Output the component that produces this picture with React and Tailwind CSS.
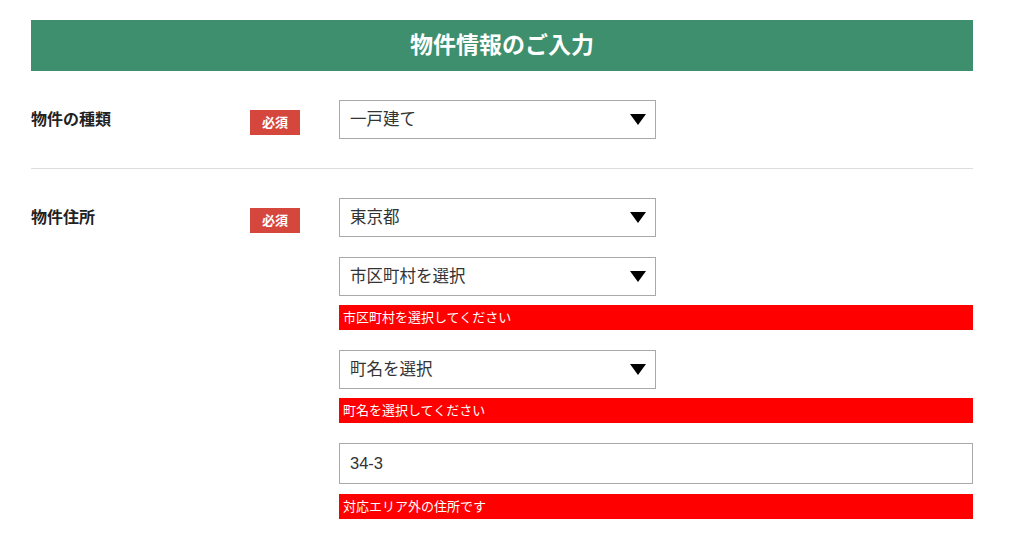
const FONT = { fontFamily: '"Liberation Sans", "Noto Sans CJK JP", sans-serif' }

function Badge() {
  return (
    <span className="flex items-center justify-center w-[50px] h-[25px] bg-[#d5463d] text-white text-[13px] font-bold">
      必須
    </span>
  )
}

function Select({ value }) {
  return (
    <div className="w-[317px] h-[39px] border border-[#a9a9a9] bg-white flex items-center justify-between pl-[10px] pr-[8px]">
      <span className="text-[16.5px] text-[#333]">{value}</span>
      <svg width="16" height="11" viewBox="0 0 16 11" className="mr-[1px]">
        <polygon points="0,0 16,0 8,11" fill="#000" />
      </svg>
    </div>
  )
}

function ErrorBar({ children }) {
  return (
    <div className="h-[25px] bg-[#ff0000] text-white text-[13px] flex items-center px-[4px]">
      {children}
    </div>
  )
}

export default function App() {
  return (
    <div className="w-[1024px] h-[541px] bg-white overflow-hidden pt-[20px]" style={FONT}>
      <div className="mx-[31px] w-[942px]">
        {/* Header */}
        <div className="h-[51px] bg-[#3d8f6d] flex items-center justify-center">
          <h1 className="text-white text-[23px] font-bold">物件情報のご入力</h1>
        </div>

        {/* 物件の種類 */}
        <div className="flex pt-[29px] pb-[29px] border-b border-[#dddddd]">
          <div className="w-[219px] h-[39px] flex items-center text-[16px] font-bold text-[#222]">物件の種類</div>
          <div className="w-[89px] pt-[10px]">
            <Badge />
          </div>
          <Select value="一戸建て" />
        </div>

        {/* 物件住所 */}
        <div className="flex pt-[29px]">
          <div className="w-[219px] h-[39px] flex items-center text-[16px] font-bold text-[#222]">物件住所</div>
          <div className="w-[89px] pt-[10px]">
            <Badge />
          </div>
          <div className="flex-1 flex flex-col">
            <Select value="東京都" />
            <div className="mt-[20px]">
              <Select value="市区町村を選択" />
            </div>
            <div className="mt-[9px]">
              <ErrorBar>市区町村を選択してください</ErrorBar>
            </div>
            <div className="mt-[20px]">
              <Select value="町名を選択" />
            </div>
            <div className="mt-[9px]">
              <ErrorBar>町名を選択してください</ErrorBar>
            </div>
            <div className="mt-[20px] h-[41px] border border-[#a9a9a9] flex items-center px-[10px] text-[16.5px] text-[#333]">
              34-3
            </div>
            <div className="mt-[10px]">
              <ErrorBar>対応エリア外の住所です</ErrorBar>
            </div>
          </div>
        </div>
      </div>
    </div>
  )
}
